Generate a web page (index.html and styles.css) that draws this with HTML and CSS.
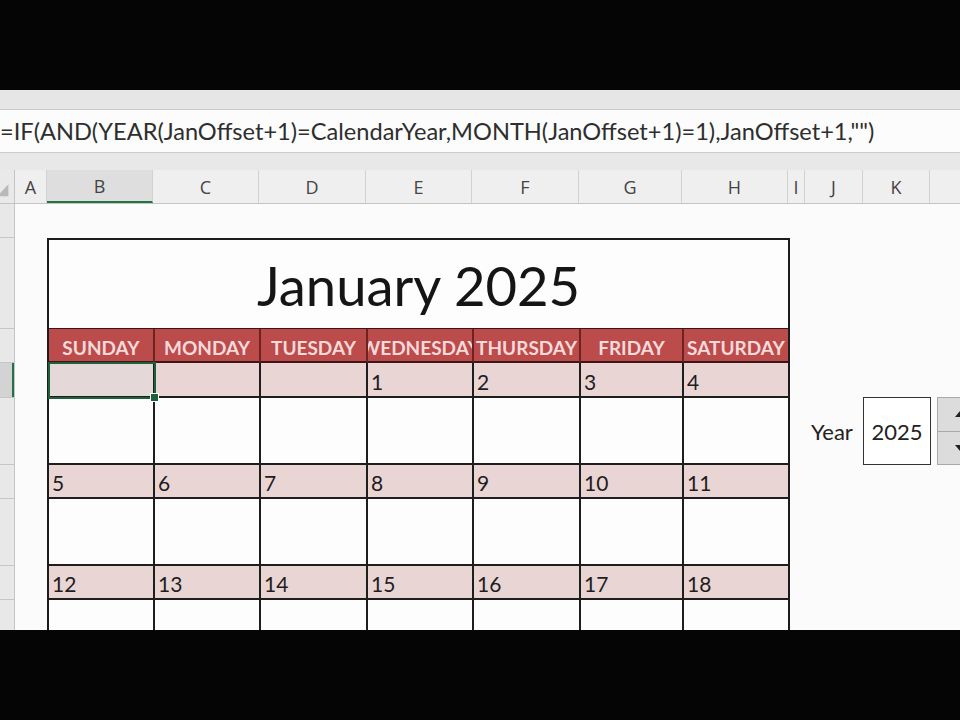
FILE: index.html
```html
<!DOCTYPE html>
<html>
<head>
<meta charset="utf-8">
<link rel="stylesheet" href="styles.css">
</head>
<body>
<div class="frame">
  <div class="black"></div>
  <div class="ribbon"></div>
  <div class="formula"><span class="ftext">=IF(AND(YEAR(JanOffset+1)=CalendarYear,MONTH(JanOffset+1)=1),JanOffset+1,"")</span></div>
  <div class="band"></div>
  <div class="colheads">
    <div class="ch corner"><svg width="15" height="34" viewBox="0 0 15 34"><polygon points="9,14 9,27 -3,27" fill="#b9b9b9"/></svg></div>
    <div class="ch w-a">A</div>
    <div class="ch w-b sel">B</div>
    <div class="ch w-c">C</div>
    <div class="ch w-d">D</div>
    <div class="ch w-e">E</div>
    <div class="ch w-f">F</div>
    <div class="ch w-g">G</div>
    <div class="ch w-h">H</div>
    <div class="ch w-i">I</div>
    <div class="ch w-j">J</div>
    <div class="ch w-k">K</div>
    <div class="ch w-l"></div>
  </div>
  <div class="sheet">
    <div class="rowheads">
      <div class="rh r34"></div>
      <div class="rh r91"></div>
      <div class="rh r34"></div>
      <div class="rh r35 rsel"></div>
      <div class="rh r67"></div>
      <div class="rh r34"></div>
      <div class="rh r67"></div>
      <div class="rh r34"></div>
      <div class="rh r67"></div>
    </div>
    <div class="canvas">
      <div class="calendar">
        <div class="title">January 2025</div>
        <div class="grid">
          <div class="dh"><span>SUNDAY</span></div>
          <div class="dh"><span>MONDAY</span></div>
          <div class="dh"><span>TUESDAY</span></div>
          <div class="dh"><span>WEDNESDAY</span></div>
          <div class="dh"><span>THURSDAY</span></div>
          <div class="dh"><span>FRIDAY</span></div>
          <div class="dh"><span>SATURDAY</span></div>

          <div class="num first cellsel"></div>
          <div class="num first"></div>
          <div class="num first"></div>
          <div class="num first">1</div>
          <div class="num first">2</div>
          <div class="num first">3</div>
          <div class="num first">4</div>
          <div class="blank"></div><div class="blank"></div><div class="blank"></div><div class="blank"></div><div class="blank"></div><div class="blank"></div><div class="blank"></div>

          <div class="num">5</div>
          <div class="num">6</div>
          <div class="num">7</div>
          <div class="num">8</div>
          <div class="num">9</div>
          <div class="num">10</div>
          <div class="num">11</div>
          <div class="blank"></div><div class="blank"></div><div class="blank"></div><div class="blank"></div><div class="blank"></div><div class="blank"></div><div class="blank"></div>

          <div class="num">12</div>
          <div class="num">13</div>
          <div class="num">14</div>
          <div class="num">15</div>
          <div class="num">16</div>
          <div class="num">17</div>
          <div class="num">18</div>
          <div class="blank"></div><div class="blank"></div><div class="blank"></div><div class="blank"></div><div class="blank"></div><div class="blank"></div><div class="blank"></div>
        </div>
      </div>
      <div class="yearctl">
        <div class="ylabel">Year</div>
        <div class="ybox">2025</div>
        <div class="spin">
          <div class="sbtn"><svg width="12" height="8" viewBox="0 0 12 8"><polygon points="6,1 11,7 1,7" fill="#222"/></svg></div>
          <div class="sbtn"><svg width="12" height="8" viewBox="0 0 12 8"><polygon points="1,1 11,1 6,7" fill="#222"/></svg></div>
        </div>
      </div>
    </div>
  </div>
  <div class="black bottom"></div>
</div>
</body>
</html>
```

FILE: styles.css
```css
html, body {
  margin: 0;
  padding: 0;
  background: #050505;
}
.frame {
  width: 960px;
  height: 720px;
  overflow: hidden;
  display: flex;
  flex-direction: column;
  background: #050505;
}
.black {
  height: 90px;
  flex-shrink: 0;
  background: #050505;
}
.black.bottom {
  height: 90px;
}
.ribbon {
  height: 19px;
  flex-shrink: 0;
  background: #e6e6e6;
  border-bottom: 1px solid #c9c9c9;
}
.formula {
  height: 42px;
  flex-shrink: 0;
  background: #fcfcfc;
  border-bottom: 1px solid #cdcdcd;
  display: flex;
  align-items: center;
  overflow: hidden;
  white-space: nowrap;
}
.ftext {
  font-family: Lato, "Liberation Sans", sans-serif;
  font-size: 23.6px;
  color: #2e2e2e;
  padding-left: 0;
}
.band {
  height: 17px;
  flex-shrink: 0;
  background: #e8e8e8;
}
.colheads {
  height: 34px;
  flex-shrink: 0;
  display: flex;
  background: #efefef;
  border-bottom: 1px solid #c4c4c4;
  box-sizing: border-box;
}
.ch {
  flex-shrink: 0;
  box-sizing: border-box;
  height: 33px;
  border-right: 1px solid #d2d2d2;
  display: flex;
  align-items: center;
  justify-content: center;
  font-family: "Open Sans", "Noto Sans", sans-serif;
  font-size: 18px;
  color: #444;
}
.ch.corner { width: 15px; border-right: 1px solid #c4c4c4; background: #e9e9e9; }
.ch.sel {
  background: #dedede;
  border-bottom: 2px solid #217346;
}
.w-a { width: 32px; }
.w-b { width: 106px; }
.w-c { width: 106px; }
.w-d { width: 107px; }
.w-e { width: 106px; }
.w-f { width: 107px; }
.w-g { width: 103px; }
.w-h { width: 106px; }
.w-i { width: 17px; }
.w-j { width: 58px; }
.w-k { width: 67px; }
.w-l { width: 60px; border-right: none; }

.sheet {
  height: 426px;
  flex-shrink: 0;
  display: flex;
  background: #fbfbfb;
  overflow: hidden;
}
.rowheads {
  width: 15px;
  flex-shrink: 0;
  background: #e8e8e8;
  border-right: 1px solid #c4c4c4;
  box-sizing: border-box;
}
.rh {
  box-sizing: border-box;
  border-bottom: 1px solid #c6c6c6;
}
.r34 { height: 34px; }
.r35 { height: 35px; }
.r67 { height: 67px; }
.r91 { height: 91px; }
.rsel {
  background: #d3d3d3;
  box-shadow: inset -2px 0 0 #217346;
}

.canvas {
  display: flex;
  align-items: flex-start;
  padding-left: 32px;
  padding-top: 34px;
}
.calendar {
  flex-shrink: 0;
  width: 743px;
  box-sizing: border-box;
  border: 2px solid #1c1c1c;
  border-bottom: none;
  background: #fdfdfd;
}
.title {
  height: 89px;
  box-sizing: border-box;
  border-bottom: 1px solid #3a1616;
  display: flex;
  align-items: center;
  justify-content: center;
  font-family: Lato, "Liberation Sans", sans-serif;
  font-size: 54.4px;
  color: #151515;
  padding-top: 2px;
}
.grid {
  display: grid;
  grid-template-columns: 106px 106px 107px 106px 107px 103px 104px;
}
.grid > div {
  box-sizing: border-box;
  border-right: 2px solid #1e1e1e;
  border-bottom: 2px solid #1e1e1e;
}
.grid > div:nth-child(7n) {
  border-right: none;
}
.dh {
  height: 34px;
  background: #bc4b4b;
  border-right-color: #6e2222 !important;
  border-bottom-color: #3e1616 !important;
  display: flex;
  align-items: center;
  justify-content: center;
  overflow: hidden;
  white-space: nowrap;
  padding-top: 4px;
  font-family: Lato, "Liberation Sans", sans-serif;
  font-weight: 700;
  font-size: 19px;
  color: #f6dada;
}
.dh span { flex-shrink: 0; }
.num {
  height: 34px;
  background: #ead5d5;
  display: flex;
  align-items: center;
  padding-left: 3px;
  padding-top: 3px;
  font-family: Lato, "Liberation Sans", sans-serif;
  font-size: 21px;
  color: #1e1e1e;
}
.num.first { height: 35px; }
.blank {
  height: 67px;
  background: #fdfdfd;
}
.cellsel {
  position: relative;
  background: #e4d8d8;
  outline: 2px solid #1f5f3c;
  outline-offset: -1px;
}
.cellsel::after {
  content: "";
  position: absolute;
  right: -6px;
  bottom: -6px;
  width: 7px;
  height: 7px;
  background: #1f5f3c;
  border: 1px solid #fff;
}

.yearctl {
  flex-shrink: 0;
  display: flex;
  align-items: center;
  margin-top: 159px;
  margin-left: 21px;
}
.ylabel {
  flex-shrink: 0;
  width: 52px;
  font-family: Lato, "Liberation Sans", sans-serif;
  font-size: 22px;
  color: #222;
}
.ybox {
  flex-shrink: 0;
  width: 68px;
  height: 68px;
  box-sizing: border-box;
  border: 1px solid #333;
  background: #fff;
  display: flex;
  align-items: center;
  justify-content: center;
  font-family: Lato, "Liberation Sans", sans-serif;
  font-size: 22px;
  color: #222;
}
.spin {
  flex-shrink: 0;
  margin-left: 6px;
  width: 46px;
  height: 68px;
  display: flex;
  flex-direction: column;
}
.sbtn {
  flex: 1;
  box-sizing: border-box;
  background: #dcdcdc;
  border: 1px solid #a9a9a9;
  display: flex;
  align-items: center;
  justify-content: center;
}
.sbtn + .sbtn { border-top: none; }
```
